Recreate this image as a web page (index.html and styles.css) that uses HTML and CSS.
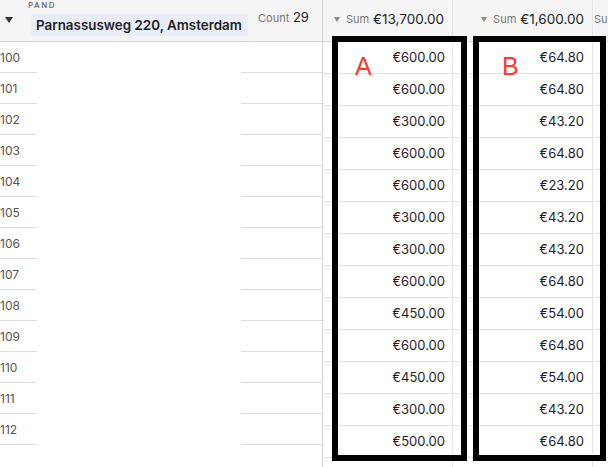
FILE: index.html
```html
<!DOCTYPE html>
<html>
<head>
<meta charset="utf-8">
<link rel="stylesheet" href="styles.css">
</head>
<body>
<div class="grid">
  <div class="left">
    <div class="lhead">
      <span class="caret"></span>
      <div class="group">
        <div class="label">PAND</div>
        <div class="pill">Parnassusweg 220, Amsterdam</div>
      </div>
      <div class="count"><span class="muted">Count</span> 29</div>
    </div>
    <div class="lrow"><div class="num">100</div><div class="mid"></div><div class="rc"></div></div>
    <div class="lrow"><div class="num">101</div><div class="mid"></div><div class="rc"></div></div>
    <div class="lrow"><div class="num">102</div><div class="mid"></div><div class="rc"></div></div>
    <div class="lrow"><div class="num">103</div><div class="mid"></div><div class="rc"></div></div>
    <div class="lrow"><div class="num">104</div><div class="mid"></div><div class="rc"></div></div>
    <div class="lrow"><div class="num">105</div><div class="mid"></div><div class="rc"></div></div>
    <div class="lrow"><div class="num">106</div><div class="mid"></div><div class="rc"></div></div>
    <div class="lrow"><div class="num">107</div><div class="mid"></div><div class="rc"></div></div>
    <div class="lrow"><div class="num">108</div><div class="mid"></div><div class="rc"></div></div>
    <div class="lrow"><div class="num">109</div><div class="mid"></div><div class="rc"></div></div>
    <div class="lrow"><div class="num">110</div><div class="mid"></div><div class="rc"></div></div>
    <div class="lrow"><div class="num">111</div><div class="mid"></div><div class="rc"></div></div>
    <div class="lrow"><div class="num">112</div><div class="mid"></div><div class="rc"></div></div>
  </div>

  <div class="col col-a">
    <div class="chead"><span class="tri"></span><span class="muted">Sum</span><span class="total">€13,700.00</span></div>
    <div class="cell">€600.00</div>
    <div class="cell">€600.00</div>
    <div class="cell">€300.00</div>
    <div class="cell">€600.00</div>
    <div class="cell">€600.00</div>
    <div class="cell">€300.00</div>
    <div class="cell">€300.00</div>
    <div class="cell">€600.00</div>
    <div class="cell">€450.00</div>
    <div class="cell">€600.00</div>
    <div class="cell">€450.00</div>
    <div class="cell">€300.00</div>
    <div class="cell">€500.00</div>
  </div>

  <div class="col col-b">
    <div class="chead"><span class="tri"></span><span class="muted">Sum</span><span class="total">€1,600.00</span></div>
    <div class="cell">€64.80</div>
    <div class="cell">€64.80</div>
    <div class="cell">€43.20</div>
    <div class="cell">€64.80</div>
    <div class="cell">€23.20</div>
    <div class="cell">€43.20</div>
    <div class="cell">€43.20</div>
    <div class="cell">€64.80</div>
    <div class="cell">€54.00</div>
    <div class="cell">€64.80</div>
    <div class="cell">€54.00</div>
    <div class="cell">€43.20</div>
    <div class="cell">€64.80</div>
  </div>

  <div class="col col-c">
    <div class="chead chead-c"><span class="muted">Sum</span></div>
    <div class="cell"></div>
    <div class="cell"></div>
    <div class="cell"></div>
    <div class="cell"></div>
    <div class="cell"></div>
    <div class="cell"></div>
    <div class="cell"></div>
    <div class="cell"></div>
    <div class="cell"></div>
    <div class="cell"></div>
    <div class="cell"></div>
    <div class="cell"></div>
    <div class="cell"></div>
  </div>

  <div class="box box-a"></div>
  <div class="box box-b"></div>
  <div class="tag tag-a">A</div>
  <div class="tag tag-b">B</div>
</div>
</body>
</html>
```

FILE: styles.css
```css
html, body {
  margin: 0;
  padding: 0;
  background: #fff;
}
body {
  font-family: Inter, "Liberation Sans", sans-serif;
  color: #1d1d1f;
  width: 608px;
  height: 467px;
  overflow: hidden;
}
.grid {
  position: relative;
  display: flex;
  height: 467px;
}
.left {
  width: 322px;
  flex: none;
  border-right: 1px solid #d4d4d4;
}
.lhead {
  height: 41px;
  background: #f5f5f5;
  border-bottom: 1px solid #d6d6d6;
  display: flex;
  align-items: flex-start;
}
.caret {
  width: 0;
  height: 0;
  margin: 17px 0 0 5px;
  border-left: 4px solid transparent;
  border-right: 4px solid transparent;
  border-top: 6px solid #333;
}
.group {
  margin-left: 15px;
  width: 220px;
  overflow: hidden;
}
.label {
  font-size: 8px;
  line-height: 10px;
  letter-spacing: 1.5px;
  color: #666;
  font-weight: 500;
}
.pill {
  margin: 4px 0 0 3px;
  height: 22px;
  line-height: 23px;
  padding-left: 5px;
  background: #e8edf7;
  border-radius: 3px 0 0 3px;
  font-size: 13.4px;
  font-weight: 600;
  color: #1f1f1f;
  white-space: nowrap;
  overflow: hidden;
}
.count {
  margin: 9px 0 0 10px;
  font-size: 13px;
  line-height: 16px;
  white-space: nowrap;
  color: #222;
}
.muted {
  color: #777;
  font-size: 11px;
}
.lrow {
  display: flex;
  height: 31px;
}
.num {
  width: 37px;
  border-bottom: 1px solid #dedede;
  font-size: 12px;
  line-height: 32px;
  color: #555;
}
.mid {
  width: 204px;
}
.rc {
  width: 81px;
  border-bottom: 1px solid #dedede;
}
.col {
  flex: none;
}
.col-a {
  width: 129px;
  border-right: 1px solid #e6e6e6;
}
.col-b {
  width: 139px;
  border-right: 1px solid #e6e6e6;
}
.col-c {
  flex: 1;
  overflow: hidden;
}
.chead {
  background: #f5f5f5;
  border-bottom: 1px solid #d6d6d6;
  display: flex;
  align-items: center;
  justify-content: flex-end;
  padding: 0 8px 3px 0;
  box-sizing: border-box;
  height: 42px;
  white-space: nowrap;
}
.chead-c {
  justify-content: flex-start;
  padding: 0 0 3px 1px;
}
.tri {
  width: 0;
  height: 0;
  border-left: 3px solid transparent;
  border-right: 3px solid transparent;
  border-top: 5px solid #8a8a8a;
  margin-right: 6px;
}
.total {
  margin-left: 4px;
  font-size: 13.5px;
  color: #222;
}
.cell {
  height: 31px;
  border-bottom: 1px solid #e2e2e2;
  font-size: 13px;
  line-height: 31px;
  text-align: right;
  padding-right: 7px;
  color: #1d1d1f;
}
.col-b .cell {
  padding-right: 8px;
}
.box {
  position: absolute;
  top: 36px;
  height: 425px;
  border: 6px solid #000;
  box-sizing: border-box;
}
.box-a {
  left: 332px;
  width: 135px;
}
.box-b {
  left: 473px;
  width: 133px;
}
.tag {
  position: absolute;
  top: 51px;
  font-family: "Liberation Sans", Arial, sans-serif;
  font-size: 25px;
  line-height: 30px;
  color: #fb3b2f;
}
.tag-a {
  left: 355px;
}
.tag-b {
  left: 502px;
}
```
